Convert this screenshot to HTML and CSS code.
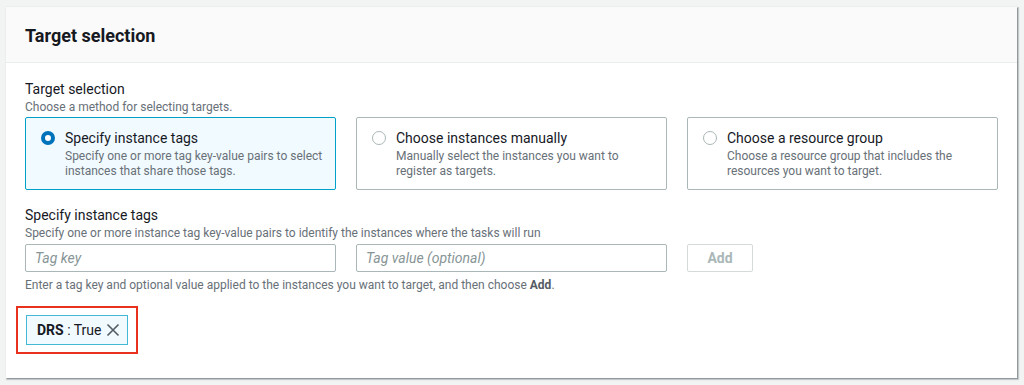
FILE: index.html
```html
<!DOCTYPE html>
<html>
<head>
<meta charset="utf-8">
<link rel="stylesheet" href="styles.css">
</head>
<body>
<div class="card">
  <div class="card-header"><h2>Target selection</h2></div>
  <div class="card-body">
    <div class="field">
      <div class="label">Target selection</div>
      <div class="desc">Choose a method for selecting targets.</div>
      <div class="tiles">
        <div class="tile selected">
          <span class="radio checked"></span>
          <div class="tile-text">
            <div class="tile-title">Specify instance tags</div>
            <div class="tile-desc">Specify one or more tag key-value pairs to select instances that share those tags.</div>
          </div>
        </div>
        <div class="tile">
          <span class="radio"></span>
          <div class="tile-text">
            <div class="tile-title">Choose instances manually</div>
            <div class="tile-desc">Manually select the instances you want to register as targets.</div>
          </div>
        </div>
        <div class="tile">
          <span class="radio"></span>
          <div class="tile-text">
            <div class="tile-title">Choose a resource group</div>
            <div class="tile-desc">Choose a resource group that includes the resources you want to target.</div>
          </div>
        </div>
      </div>
    </div>
    <div class="field second">
      <div class="label">Specify instance tags</div>
      <div class="desc">Specify one or more instance tag key-value pairs to identify the instances where the tasks will run</div>
      <div class="inputs">
        <input class="input" type="text" placeholder="Tag key">
        <input class="input" type="text" placeholder="Tag value (optional)">
        <button class="btn" disabled>Add</button>
      </div>
      <div class="help">Enter a tag key and optional value applied to the instances you want to target, and then choose <b>Add</b>.</div>
      <div class="highlight">
        <div class="token"><b>DRS</b>&nbsp;: True
          <svg class="x" width="14" height="14" viewBox="0 0 14 14"><path d="M1.5 1.5 L12.5 12.5 M12.5 1.5 L1.5 12.5" stroke="#545b64" stroke-width="1.6" fill="none"/></svg>
        </div>
      </div>
    </div>
  </div>
</div>
</body>
</html>
```
FILE: styles.css
```css
html, body { margin: 0; padding: 0; }
body {
  background: #f2f3f3;
  font-family: Roboto, "Noto Sans", sans-serif;
  color: #16191f;
  padding: 7px 6px 0 6px;
  height: 385px;
  box-sizing: border-box;
}
.card {
  background: #fff;
  width: 1011px;
  box-shadow: 1px 1px 1px 0 rgba(0,28,36,0.3), 1px 1px 1px 1px rgba(0,28,36,0.15);
}
.card-header {
  background: #fafafa;
  border-bottom: 1px solid #eaeded;
  height: 56px;
  box-sizing: border-box;
  display: flex;
  align-items: center;
  padding: 3px 19px 0 19px;
}
.card-header h2 {
  margin: 0;
  font-size: 18px;
  font-weight: 700;
  line-height: 22px;
}
.card-body {
  padding: 16px 19px 24px 19px;
}
.label {
  font-size: 14px;
  line-height: 20px;
}
.desc {
  font-size: 12px;
  line-height: 16px;
  color: #687078;
}
.tiles {
  display: grid;
  grid-template-columns: 311px 311px 311px;
  gap: 20px;
  margin-top: 2px;
}
.tile {
  border: 1px solid #aab7b8;
  border-radius: 2px;
  height: 73px;
  box-sizing: border-box;
  padding: 9px 6px 10px 15px;
  display: flex;
  gap: 10px;
}
.tile.selected {
  background: #f1faff;
  border-color: #00a1c9;
}
.radio {
  flex: none;
  width: 14px;
  height: 14px;
  box-sizing: border-box;
  border: 1px solid #aab7b8;
  border-radius: 50%;
  background: #fff;
  margin-top: 4px;
}
.radio.checked {
  border: 4px solid #0073bb;
}
.tile-title {
  font-size: 14px;
  line-height: 22px;
}
.tile-desc {
  font-size: 12px;
  line-height: 15px;
  color: #687078;
}
.field.second { margin-top: 15px; }
.inputs {
  display: flex;
  gap: 20px;
  margin-top: 3px;
}
.input {
  width: 311px;
  height: 28px;
  box-sizing: border-box;
  border: 1px solid #aab7b8;
  border-radius: 2px;
  padding: 0 9px;
  font-family: inherit;
  font-size: 14px;
  background: #fff;
}
.input::placeholder {
  color: #879596;
  font-style: italic;
}
.btn {
  width: 66px;
  height: 28px;
  border: 1px solid #d5dbdb;
  border-radius: 2px;
  background: #fff;
  color: #aab7b8;
  font-family: inherit;
  font-weight: 700;
  font-size: 14px;
}
.help {
  font-size: 12px;
  line-height: 16px;
  color: #687078;
  margin-top: 5px;
}
.help b { color: #545b64; }
.highlight {
  display: inline-block;
  border: 2px solid #e8321e;
  padding: 7px 8px;
  margin-top: 13px;
  margin-left: -9px;
}
.token {
  display: flex;
  align-items: center;
  height: 30px;
  box-sizing: border-box;
  background: #f1faff;
  border: 1px solid #44b9d6;
  padding: 0 7px 0 10px;
  font-size: 14px;
}
.token .x { margin-left: 5px; }
```
